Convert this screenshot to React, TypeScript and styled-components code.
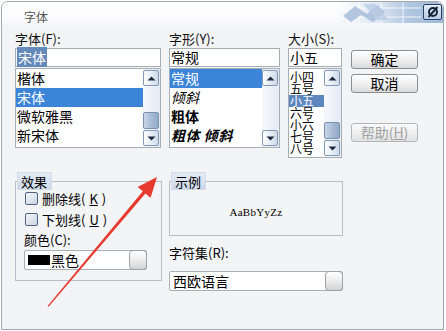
import React from 'react';
import styled, { createGlobalStyle } from 'styled-components';

const Global = createGlobalStyle`
  html, body { margin: 0; padding: 0; background: #ffffff; }
  body { font-family: "Noto Sans CJK SC", "Noto Sans", sans-serif; }
  * { box-sizing: border-box; }
`;

const Root = styled.div`
  position: relative;
  width: 446px;
  height: 331px;
  padding: 1px 0 0 1px;
`;

const Window = styled.div`
  width: 443px;
  height: 329px;
  border: 1px solid #a3a8ae;
  border-radius: 7px 7px 0 0;
  background: #f3f4f6;
  overflow: hidden;
  color: #000;
  font-family: "Noto Sans CJK SC", sans-serif;
`;

const TitleBar = styled.div`
  display: flex;
  align-items: flex-start;
  height: 25px;
  background: linear-gradient(180deg, #ffffff 0%, #fbfbfc 60%, #f4f5f7 100%);
`;

const TitleText = styled.div`
  margin: 8px 0 0 22px;
  font-size: 12px;
  line-height: 14px;
  color: #555;
`;

const TitleRight = styled.div`
  margin-left: auto;
  display: flex;
  align-items: flex-start;
  height: 21px;
  width: 106px;
  border-top-right-radius: 6px;
  background: linear-gradient(90deg, rgba(255,255,255,0) 0%, #dce6f2 40%, #b3c8e1 65%, #9fb8d7 100%);
`;

const CloseButton = styled.div`
  margin: 2px 1px 0 auto;
  width: 19px;
  height: 16px;
  border: 1px solid #2c4364;
  border-radius: 2px;
  background: linear-gradient(180deg, #e3ecf7 0%, #b9cde6 100%);
  display: flex;
  align-items: center;
  justify-content: center;
`;

const Body = styled.div`
  padding: 3px 0 0 13px;
`;

const TopGrid = styled.div`
  display: grid;
  grid-template-columns: 146px 111px 54px 68px;
  column-gap: 8px;
  align-items: start;
`;

const Column = styled.div`
  display: flex;
  flex-direction: column;
`;

const Label = styled.div`
  height: 17px;
  font-size: 13px;
  line-height: 17px;
  white-space: nowrap;
  color: #111;
`;

const Input = styled.div`
  margin-top: 1px;
  height: 19px;
  border: 1px solid #a7adb5;
  background: #fff;
  font-size: 14px;
  line-height: 17px;
  padding-left: 1px;
  white-space: nowrap;
`;

const Selected = styled.span`
  background: #6489bb;
  color: #fff;
  padding: 0 1px;
`;

const ListBox = styled.div<{ $h: number }>`
  margin-top: 1px;
  height: ${p => p.$h}px;
  border: 1px solid #a7adb5;
  background: #fff;
  display: flex;
  overflow: hidden;
`;

const Items = styled.div<{ $pt: number }>`
  flex: 1;
  min-width: 0;
  padding-top: ${p => p.$pt}px;
  overflow: hidden;
`;

const Item = styled.div<{ $h: number; $fs?: number; $sel?: boolean; $selColor?: string; $bold?: boolean; $italic?: boolean }>`
  height: ${p => p.$h}px;
  line-height: ${p => p.$h}px;
  font-size: ${p => p.$fs || 14}px;
  padding-left: 1px;
  white-space: nowrap;
  background: ${p => (p.$sel ? p.$selColor || '#3c84d8' : 'transparent')};
  color: ${p => (p.$sel ? '#fff' : '#000')};
  font-weight: ${p => (p.$bold ? 700 : 400)};
  font-style: ${p => (p.$italic ? 'italic' : 'normal')};
  letter-spacing: ${p => (p.$bold && p.$italic ? '0.5px' : '0')};
`;

const ScrollBar = styled.div`
  width: 17px;
  padding: 1px 1px 1px 0;
  display: flex;
  flex-direction: column;
  gap: 1px;
  background: linear-gradient(90deg, #f6f8fb 0%, #e4ebf4 100%);
`;

const ScrollBtn = styled.div`
  height: 16px;
  border: 1px solid #8398b6;
  border-radius: 2px;
  background: linear-gradient(90deg, #fdfeff 0%, #e6edf6 50%, #cfdbea 100%);
  display: flex;
  align-items: center;
  justify-content: center;
`;

const Track = styled.div`
  flex: 1;
  display: flex;
  flex-direction: column;
  justify-content: flex-end;
`;

const Thumb = styled.div`
  height: 17px;
  border: 1px solid #7a90b0;
  border-radius: 2px;
  background: linear-gradient(90deg, #c9d6e8 0%, #a9bcd6 50%, #93a9c8 100%);
`;

const ButtonCol = styled.div`
  margin-left: 1px;
  display: flex;
  flex-direction: column;
  padding-top: 20px;
`;

const Button = styled.div<{ $gap: number; $disabled?: boolean }>`
  margin-top: ${p => p.$gap}px;
  height: 19px;
  border: 1px solid ${p => (p.$disabled ? '#b3b5b8' : '#8c8e91')};
  border-radius: 3px;
  background: ${p =>
    p.$disabled
      ? 'linear-gradient(180deg, #fbfbfb 0%, #eeeeee 50%, #e2e2e2 100%)'
      : 'linear-gradient(180deg, #ffffff 0%, #f0f0f0 50%, #d9d9d9 100%)'};
  color: ${p => (p.$disabled ? '#a2a2a2' : '#000')};
  font-size: 14px;
  line-height: 17px;
  text-align: center;
`;

const U = styled.span`
  text-decoration: underline;
`;

const BottomGrid = styled.div`
  margin-top: 14px;
  display: grid;
  grid-template-columns: 147px 174px;
  column-gap: 7px;
  align-items: start;
`;

const Group = styled.div`
  display: flex;
  flex-direction: column;
`;

const GroupTab = styled.div`
  position: relative;
  z-index: 1;
  align-self: flex-start;
  margin-left: 2px;
  height: 18px;
  padding: 0 4px 0 3px;
  font-size: 13px;
  line-height: 18px;
  background: linear-gradient(180deg, #e4ebf4 0%, #cbd8e8 100%);
  border: 1px solid #d3dce8;
  border-bottom: none;
`;

const GroupBox = styled.div<{ $h: number }>`
  margin-top: -9px;
  height: ${p => p.$h}px;
  border: 1px solid #b9bec5;
`;

const EffectsBox = styled(GroupBox)`
  padding: 9px 0 0 8px;
  display: flex;
  flex-direction: column;
`;

const CheckRow = styled.div<{ $mt: number }>`
  margin-top: ${p => p.$mt}px;
  margin-left: 1px;
  height: 15px;
  display: flex;
  align-items: center;
  gap: 4px;
  font-size: 13px;
  line-height: 15px;
`;

const CheckBox = styled.div`
  width: 13px;
  height: 13px;
  border: 1px solid #4f6386;
  border-radius: 2px;
  background: linear-gradient(135deg, #f4f6f9 0%, #dde3ec 60%, #c9d3e1 100%);
`;

const SmallLabel = styled.div<{ $mt: number }>`
  margin-top: ${p => p.$mt}px;
  height: 14px;
  font-size: 13px;
  line-height: 14px;
`;

const Combo = styled.div<{ $w: number; $mt: number }>`
  margin-top: ${p => p.$mt}px;
  width: ${p => p.$w}px;
  height: 20px;
  border: 1px solid #aab0b7;
  border-radius: 2px;
  background: #fff;
  display: flex;
  align-items: stretch;
  font-size: 14px;
  line-height: 18px;
`;

const ComboText = styled.div`
  flex: 1;
  display: flex;
  align-items: center;
  padding-left: 3px;
  white-space: nowrap;
`;

const Swatch = styled.span`
  width: 22px;
  height: 10px;
  background: #000;
  margin-right: 1px;
`;

const ComboButton = styled.div`
  width: 18px;
  margin: -1px -1px -1px 0;
  border: 1px solid #9fa3a8;
  border-radius: 4px;
  background: linear-gradient(180deg, #ffffff 0%, #ececec 50%, #d3d3d3 100%);
`;

const SampleBox = styled(GroupBox)`
  display: flex;
  align-items: center;
  justify-content: center;
  padding-top: 6px;
  font-family: "Liberation Serif", "DejaVu Serif", serif;
  font-size: 11px;
  letter-spacing: 0.3px;
`;

const RightBottom = styled.div`
  display: flex;
  flex-direction: column;
`;

const ArrowOverlay = styled.svg`
  position: absolute;
  left: 0;
  top: 0;
  pointer-events: none;
`;

const Up = () => (
  <svg width="9" height="5" viewBox="0 0 9 5"><path d="M0.5 4.5 L4.5 0.5 L8.5 4.5 Z" fill="#1d2b40" /></svg>
);
const Down = () => (
  <svg width="9" height="5" viewBox="0 0 9 5"><path d="M0.5 0.5 L4.5 4.5 L8.5 0.5 Z" fill="#1d2b40" /></svg>
);

const Scroll: React.FC<{ thumb?: boolean }> = ({ thumb }) => (
  <ScrollBar>
    <ScrollBtn><Up /></ScrollBtn>
    <Track>{thumb && <Thumb />}</Track>
    <ScrollBtn><Down /></ScrollBtn>
  </ScrollBar>
);

const Deco = () => (
  <svg width="84" height="21" viewBox="0 0 84 21">
    <g stroke="#ffffff" strokeOpacity="0.8" strokeWidth="1">
      <line x1="10" y1="0" x2="10" y2="21" />
      <line x1="22" y1="0" x2="22" y2="21" />
      <line x1="44" y1="0" x2="44" y2="21" />
      <line x1="66" y1="0" x2="66" y2="21" />
      <line x1="0" y1="6" x2="84" y2="6" />
      <line x1="0" y1="15" x2="84" y2="15" />
    </g>
    <path d="M6 14 L18 4 L30 12 L40 3 L48 10 L36 20 L24 13 L14 20 Z" fill="#9db6d6" fillOpacity="0.75" />
    <path d="M26 2 L38 2 L52 18 L40 18 Z" fill="#b9cce3" fillOpacity="0.8" />
  </svg>
);

const fonts = ['楷体', '宋体', '微软雅黑', '新宋体'];
const styles = [
  { t: '常规', sel: true },
  { t: '倾斜', italic: true },
  { t: '粗体', bold: true },
  { t: '粗体 倾斜', bold: true, italic: true },
];
const sizes = ['小四', '五号', '小五', '六号', '小六', '七号', '八号'];

export default function App() {
  return (
    <Root>
      <Global />
      <Window>
        <TitleBar>
          <TitleText>字体</TitleText>
          <TitleRight>
            <Deco />
            <CloseButton>
              <svg width="12" height="12" viewBox="0 0 12 12">
                <circle cx="6" cy="6" r="4" fill="none" stroke="#17233a" strokeWidth="2" />
                <line x1="10.5" y1="1" x2="1.5" y2="11" stroke="#17233a" strokeWidth="2" />
              </svg>
            </CloseButton>
          </TitleRight>
        </TitleBar>
        <Body>
          <TopGrid>
            <Column>
              <Label>字体(F):</Label>
              <Input><Selected>宋体</Selected></Input>
              <ListBox $h={80}>
                <Items $pt={0}>
                  {fonts.map(f => (
                    <Item key={f} $h={19} $sel={f === '宋体'}>{f}</Item>
                  ))}
                </Items>
                <Scroll thumb />
              </ListBox>
            </Column>
            <Column>
              <Label>字形(Y):</Label>
              <Input>常规</Input>
              <ListBox $h={80}>
                <Items $pt={0}>
                  {styles.map(s => (
                    <Item key={s.t} $h={19} $sel={s.sel} $bold={s.bold} $italic={s.italic}>{s.t}</Item>
                  ))}
                </Items>
                <Scroll />
              </ListBox>
            </Column>
            <Column>
              <Label>大小(S):</Label>
              <Input>小五</Input>
              <ListBox $h={90}>
                <Items $pt={2}>
                  {sizes.map(s => (
                    <Item key={s} $h={12} $fs={12} $sel={s === '小五'} $selColor="#5d86bf">{s}</Item>
                  ))}
                </Items>
                <Scroll thumb />
              </ListBox>
            </Column>
            <ButtonCol>
              <Button $gap={0}>确定</Button>
              <Button $gap={5}>取消</Button>
              <Button $gap={30} $disabled>帮助(<U>H</U>)</Button>
            </ButtonCol>
          </TopGrid>
          <BottomGrid>
            <Group>
              <GroupTab>效果</GroupTab>
              <EffectsBox $h={100}>
                <CheckRow $mt={0}><CheckBox />删除线(<U>K</U>)</CheckRow>
                <CheckRow $mt={6}><CheckBox />下划线(<U>U</U>)</CheckRow>
                <SmallLabel $mt={6}>颜色(C):</SmallLabel>
                <Combo $w={123} $mt={3}>
                  <ComboText><Swatch />黑色</ComboText>
                  <ComboButton />
                </Combo>
              </EffectsBox>
            </Group>
            <RightBottom>
              <Group>
                <GroupTab>示例</GroupTab>
                <SampleBox $h={55}>AaBbYyZz</SampleBox>
              </Group>
              <SmallLabel $mt={10}>字符集(R):</SmallLabel>
              <Combo $w={174} $mt={11}>
                <ComboText>西欧语言</ComboText>
                <ComboButton />
              </Combo>
            </RightBottom>
          </BottomGrid>
        </Body>
      </Window>
      <ArrowOverlay width="446" height="331" viewBox="0 0 446 331">
        <polygon
          points="47.4,306.2 48.8,306.6 145.4,193.6 150.6,197.8 157,177 137.6,187 142.8,191.2"
          fill="#e8392f"
        />
      </ArrowOverlay>
    </Root>
  );
}
